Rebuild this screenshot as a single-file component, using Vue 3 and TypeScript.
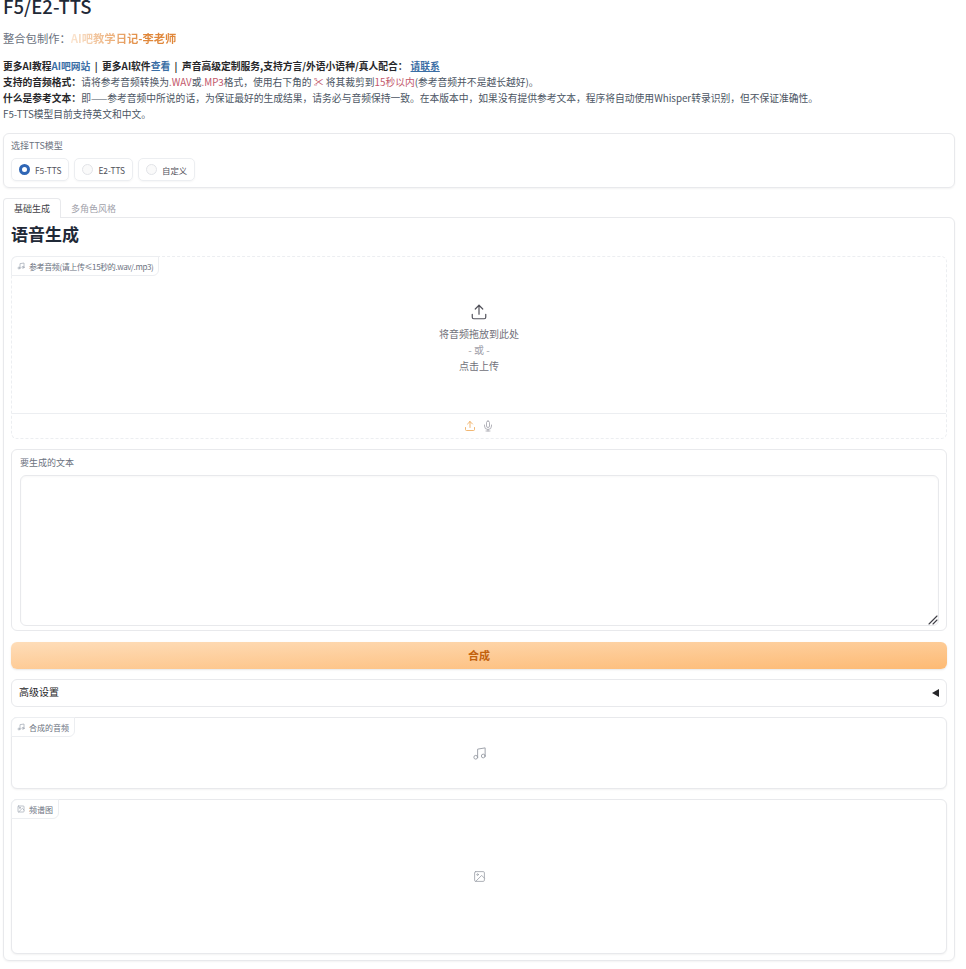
<script setup lang="ts">
const radios = [
  { label: 'F5-TTS', on: true },
  { label: 'E2-TTS', on: false },
  { label: '自定义', on: false },
]
</script>

<template>
  <main class="page">
    <h1 class="title">F5/E2-TTS</h1>
    <p class="maker">整合包制作：<span class="grad">AI吧教学日记-李老师</span></p>
    <div class="intro">
      <p><b>更多AI教程<a>AI吧网站</a> &nbsp;|&nbsp; 更多AI软件<a>查看</a> &nbsp;|&nbsp; 声音高级定制服务,支持方言/外语小语种/真人配合：</b><a class="b">请联系</a></p>
      <p><b>支持的音频格式：</b>请将参考音频转换为<span class="red">.WAV</span>或<span class="red">.MP3</span>格式，使用右下角的 <span class="red">✂</span> 将其裁剪到<span class="red">15秒以内</span>(参考音频并不是越长越好)。</p>
      <p><b>什么是参考文本：</b>即——参考音频中所说的话，为保证最好的生成结果，请务必与音频保持一致。在本版本中，如果没有提供参考文本，程序将自动使用Whisper转录识别，但不保证准确性。</p>
      <p>F5-TTS模型目前支持英文和中文。</p>
    </div>

    <section class="radio-box">
      <div class="small-label">选择TTS模型</div>
      <div class="radios">
        <label v-for="r in radios" :key="r.label" class="radio">
          <span class="dot" :class="{ on: r.on }"></span>{{ r.label }}
        </label>
      </div>
    </section>

    <nav class="tabs">
      <span class="tab active">基础生成</span>
      <span class="tab">多角色风格</span>
    </nav>

    <section class="panel">
      <h2 class="heading">语音生成</h2>

      <div class="block upload">
        <div class="chip tight">
          <svg class="chip-icon" viewBox="0 0 24 24"><path d="M9 18V5l12-2v13" /><circle cx="6" cy="18" r="3" /><circle cx="18" cy="16" r="3" /></svg>
          参考音频(请上传≤15秒的.wav/.mp3)
        </div>
        <div class="drop">
          <svg class="up-big" viewBox="0 0 24 24"><path d="M21 15v4a2 2 0 0 1-2 2H5a2 2 0 0 1-2-2v-4" /><path d="M17 8l-5-5-5 5" /><path d="M12 3v12" /></svg>
          <div>将音频拖放到此处</div>
          <div class="or">- 或 -</div>
          <div>点击上传</div>
        </div>
        <div class="toolbar">
          <svg class="tool orange" viewBox="0 0 24 24"><path d="M21 15v4a2 2 0 0 1-2 2H5a2 2 0 0 1-2-2v-4" /><path d="M17 8l-5-5-5 5" /><path d="M12 3v12" /></svg>
          <svg class="tool" viewBox="0 0 24 24"><path d="M12 2a3 3 0 0 0-3 3v7a3 3 0 0 0 6 0V5a3 3 0 0 0-3-3z" /><path d="M19 10v2a7 7 0 0 1-14 0v-2" /><path d="M12 19v3" /><path d="M8 22h8" /></svg>
        </div>
      </div>

      <div class="block textblock">
        <div class="small-label">要生成的文本</div>
        <div class="textarea">
          <svg class="grip" viewBox="0 0 10 10"><path d="M1 9l8-8M5 9l4-4" /></svg>
        </div>
      </div>

      <button class="synth" type="button">合成</button>

      <div class="block advanced">
        <span>高级设置</span>
        <span class="tri"></span>
      </div>

      <div class="block output audio-out">
        <div class="chip">
          <svg class="chip-icon" viewBox="0 0 24 24"><path d="M9 18V5l12-2v13" /><circle cx="6" cy="18" r="3" /><circle cx="18" cy="16" r="3" /></svg>
          合成的音频
        </div>
        <svg class="empty music" viewBox="0 0 24 24"><path d="M9 18V5l12-2v13" /><circle cx="6" cy="18" r="3" /><circle cx="18" cy="16" r="3" /></svg>
      </div>

      <div class="block output spec-out">
        <div class="chip">
          <svg class="chip-icon" viewBox="0 0 24 24"><rect x="3" y="3" width="18" height="18" rx="2" /><circle cx="8.5" cy="8.5" r="1.5" /><path d="M21 15l-5-5L5 21" /></svg>
          频谱图
        </div>
        <svg class="empty" viewBox="0 0 24 24"><rect x="3" y="3" width="18" height="18" rx="2" /><circle cx="8.5" cy="8.5" r="1.5" /><path d="M21 15l-5-5L5 21" /></svg>
      </div>
    </section>
  </main>
</template>

<style>
html, body { background: #fff; margin: 0; overflow: hidden; }
</style>

<style scoped>
.page {
  box-sizing: border-box;
  width: 958px;
  padding: 0 3px;
  height: 969px;
  overflow: hidden;
  font-family: "Noto Sans CJK SC", "Noto Sans", sans-serif;
  color: #27272a;
  font-size: 9.78px;
}
.title {
  margin: -8px 0 0;
  font-size: 18.5px;
  line-height: 28px;
  font-weight: 500;
  color: #1f2937;
}
.maker {
  margin: 10px 0 0;
  font-size: 11.3px;
  line-height: 16px;
  color: #6b7280;
}
.grad {
  font-weight: 700;
  background: linear-gradient(90deg, #fbe6d2, #e0873a 70%);
  -webkit-background-clip: text;
  background-clip: text;
  color: transparent;
}
.intro { margin-top: 12px; }
.intro p { margin: 0; line-height: 16px; height: 16px; white-space: nowrap; color: #4b5563; }
.intro b { color: #27272a; font-weight: 700; }
.intro a { color: #3a6ea5; }
.intro a.b { margin-left: 3px; font-weight: 700; text-decoration: underline; }
.red { color: #c2566a; }

.radio-box {
  margin-top: 11px;
  height: 55px;
  box-sizing: border-box;
  border: 1px solid #e8e9ec;
  border-radius: 6px;
  padding: 5px 7px;
  box-shadow: 0 1px 2px rgba(0, 0, 0, 0.05);
}
.small-label { font-size: 9px; line-height: 13px; color: #6b7280; }
.radios { display: flex; gap: 5px; margin-top: 6px; }
.radio {
  display: flex;
  align-items: center;
  gap: 5px;
  height: 23px;
  box-sizing: border-box;
  padding: 0 7px;
  font-size: 8.4px;
  color: #52525b;
  border: 1px solid #eceef1;
  border-radius: 5px;
  box-shadow: 0 1px 2px rgba(0, 0, 0, 0.04);
}
.dot {
  box-sizing: border-box;
  width: 11px;
  height: 11px;
  border-radius: 50%;
  border: 1px solid #e2e4e8;
  background: #fafafa;
}
.dot.on { border: 3px solid #2f66b5; background: #fff; }

.tabs {
  display: flex;
  height: 20px;
  margin-top: 10px;
}
.tab {
  display: flex;
  align-items: center;
  padding: 0 10px;
  font-size: 9px;
  color: #a1a1aa;
}
.tab.active {
  color: #3f3f46;
  background: #fff;
  border: 1px solid #e8e9ec;
  border-bottom: 0;
  border-radius: 4px 4px 0 0;
  position: relative;
  z-index: 1;
}
.panel {
  box-sizing: border-box;
  height: 744px;
  margin-top: -1px;
  border: 1px solid #e8e9ec;
  border-radius: 0 6px 6px 6px;
  padding: 0 7px;
  box-shadow: 0 1px 2px rgba(0, 0, 0, 0.05);
}
.heading {
  margin: 0;
  height: 38px;
  font-size: 17px;
  line-height: 32px;
  font-weight: 700;
  color: #1f2937;
}
.block {
  position: relative;
  box-sizing: border-box;
  border: 1px solid #e8e9ec;
  border-radius: 6px;
  background: #fff;
}
.chip {
  position: absolute;
  top: -1px;
  left: -1px;
  display: flex;
  align-items: center;
  gap: 4px;
  height: 18px;
  padding: 0 5px;
  font-size: 8px;
  color: #6b7280;
  background: #fff;
  border: 1px solid #eceef1;
  border-radius: 6px 0 6px 0;
  white-space: nowrap;
}
.chip.tight { letter-spacing: -0.4px; }
svg { fill: none; stroke: currentColor; stroke-width: 2; stroke-linecap: round; stroke-linejoin: round; }
.chip-icon { width: 8px; height: 8px; color: #9ca3af; }

.upload { height: 183px; border-style: dashed; border-color: #eceef1; display: flex; flex-direction: column; }
.drop {
  height: 156px;
  flex: none;
  display: flex;
  flex-direction: column;
  align-items: center;
  justify-content: flex-start;
  padding-top: 46px;
  box-sizing: border-box;
  font-size: 10px;
  line-height: 16px;
  color: #71717a;
}
.up-big { width: 18px; height: 18px; color: #52525b; margin-bottom: 5px; stroke-width: 1.6; }
.or { color: #a1a1aa; }
.toolbar {
  flex: 1;
  display: flex;
  align-items: center;
  justify-content: center;
  gap: 6px;
  border-top: 1px solid #eceef1;
}
.tool { width: 12px; height: 12px; color: #a1a1aa; stroke-width: 1.6; }
.tool.orange { color: #eda44f; }

.textblock { margin-top: 10px; height: 182px; padding: 6px 7px 5px 8px; }
.textarea {
  position: relative;
  box-sizing: border-box;
  height: 151px;
  margin-top: 6px;
  border: 1px solid #e8e9ec;
  border-radius: 6px;
  box-shadow: inset 0 1px 2px rgba(0, 0, 0, 0.03);
}
.grip {
  position: absolute;
  right: 0;
  bottom: 0;
  width: 10px;
  height: 10px;
  color: #3f3f46;
  stroke-width: 1.1;
}

.synth {
  display: block;
  width: 100%;
  height: 27px;
  margin-top: 11px;
  padding: 0 0 2px;
  border: 0;
  border-radius: 6px;
  background: linear-gradient(to bottom right, #feddb9, #fdba74);
  box-shadow: 0 1px 2px rgba(0, 0, 0, 0.1);
  color: #c2610c;
  font: 700 11px "Noto Sans CJK SC", sans-serif;
}
.advanced {
  margin-top: 10px;
  height: 28px;
  display: flex;
  align-items: center;
  justify-content: space-between;
  padding: 0 7px 4px;
  font-size: 10px;
  color: #27272a;
}
.tri {
  width: 0;
  height: 0;
  margin-top: 4px;
  border-style: solid;
  border-width: 4px 7px 4px 0;
  border-color: transparent #27272a transparent transparent;
}
.output { display: flex; align-items: center; justify-content: center; margin-top: 10px; box-shadow: 0 1px 2px rgba(0, 0, 0, 0.05); }
.audio-out { height: 72px; }
.spec-out { height: 155px; }
.empty { width: 13px; height: 13px; color: #9a9ea6; stroke-width: 1.5; }
.empty.music { width: 15px; height: 15px; }
</style>
